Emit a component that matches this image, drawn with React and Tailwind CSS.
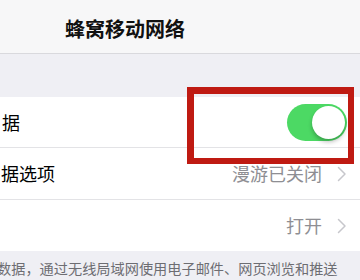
function Chevron() {
	return (
		<svg width="10" height="16" viewBox="0 0 10 16" fill="none" className="shrink-0">
			<path d="M1.5 1.5 8 8l-6.5 6.5" stroke="#c7c7cc" strokeWidth="1.5" strokeLinecap="round" strokeLinejoin="round" />
		</svg>
	);
}

function Toggle() {
	return (
		<div className="relative h-[37px] w-[60px] rounded-full bg-[#4cd964]">
			<div className="absolute right-[2px] top-[2px] h-[33px] w-[33px] rounded-full bg-white shadow-[0_3px_4px_rgba(0,0,0,0.25)]" />
		</div>
	);
}

export default function App() {
	return (
		<div className="relative h-[280px] w-[360px] overflow-hidden bg-[#efeff4] font-['Noto_Sans_CJK_SC',sans-serif]">
			<div className="flex h-[54px] items-center border-b border-[#d9d9dd] bg-[#f7f7f8] pl-[65px] pt-[5px]">
				<span className="text-[20px] font-semibold leading-none text-[#111]">蜂窝移动网络</span>
			</div>

			<div className="h-[43px]" />

			<div className="bg-white">
				<div className="flex h-[50px] items-center justify-between pl-[2px] pr-[13px]">
					<span className="text-[18px] text-black">据</span>
					<Toggle />
				</div>
				<div className="h-px bg-[#e3e3e6]" />
				<div className="flex h-[51px] items-center justify-between pl-[1px] pr-[13px]">
					<span className="text-[18px] text-black">据选项</span>
					<div className="flex items-center gap-[15px]">
						<span className="text-[18px] text-[#8e8e93]">漫游已关闭</span>
						<Chevron />
					</div>
				</div>
				<div className="h-px bg-[#e3e3e6]" />
				<div className="flex h-[51px] items-center justify-end pr-[13px]">
					<div className="flex items-center gap-[15px]">
						<span className="text-[18px] text-[#8e8e93]">打开</span>
						<Chevron />
					</div>
				</div>
			</div>

			<div className="pt-[7px] text-[14.2px] leading-[20px] text-[#6d6d72]">
				<div className="ml-[-3px] whitespace-nowrap">数据，通过无线局域网使用电子邮件、网页浏览和推送</div>
				<div className="ml-[-3px] whitespace-nowrap">通知。</div>
			</div>

			<div className="absolute left-[187px] top-[87px] h-[77px] w-[167px] border-[6px] border-l-[7px] border-t-[7px] border-[#bf1a12]" />
		</div>
	);
}
